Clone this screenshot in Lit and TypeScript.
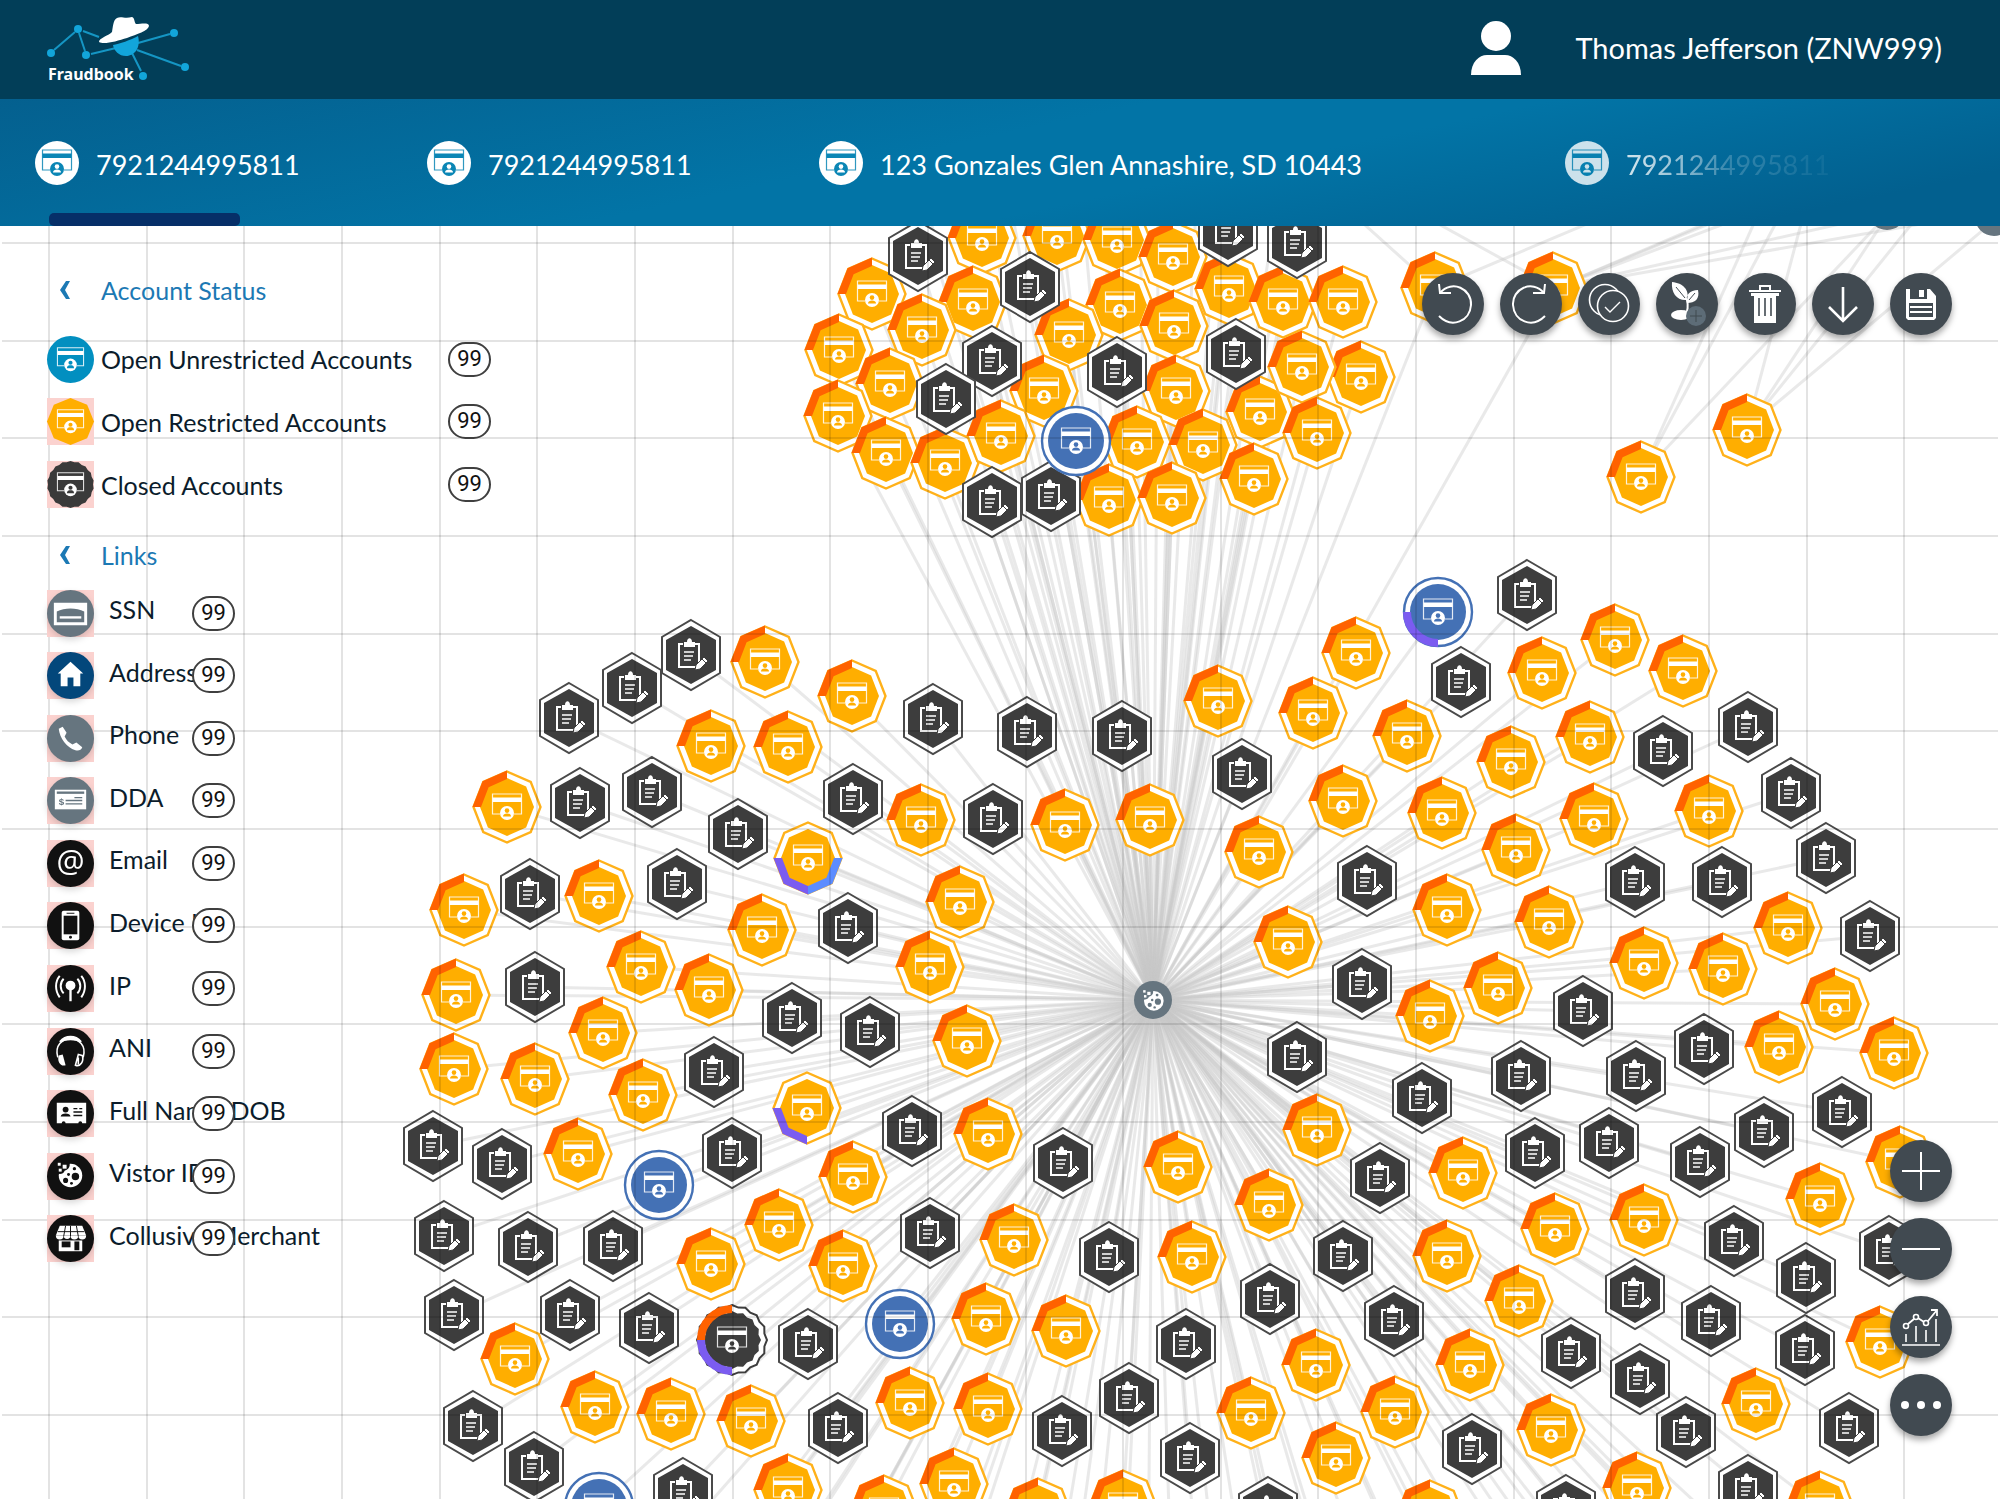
import { LitElement, html, svg, css } from "lit";
import { customElement, state } from "lit/decorators.js";
import { classMap } from "lit/directives/class-map.js";

type Kind = "restricted" | "multi" | "linked" | "merged" | "case" | "open" | "openLinked" | "closed";
type Point = [number, number];

/* Graph layout in world units; the camera zoom turns them into canvas pixels. */
const ZOOM = 1.27551;
const at = (v: number) => Math.round(v * ZOOM) + 1;
const HUB: Point = [903, 783];

const RESTRICTED: Point[] = [
  [769, 186], [828, 184], [875, 187], [919, 201], [963, 226], [683, 230], [762, 236], [877, 238], [1005, 236],
  [1052, 236], [920, 255], [837, 262], [657, 274], [722, 258], [1066, 295], [818, 306], [697, 300],
  [921, 306], [656, 325], [987, 322], [1020, 287], [1032, 339], [694, 354], [740, 362], [784, 341], [891, 346],
  [942, 348], [982, 375], [869, 391], [918, 390],
  [1124, 225], [1217, 225], [1369, 336], [1286, 373],
  [599, 518], [667, 545], [557, 584], [617, 585], [397, 632], [721, 642], [834, 646], [901, 642], [469, 702],
  [363, 713], [597, 728], [752, 706], [502, 757], [555, 775], [728, 757], [357, 779], [472, 809], [757, 815],
  [355, 837], [419, 845], [503, 858], [774, 888], [452, 904], [668, 922], [610, 960], [557, 990], [660, 992],
  [794, 971], [923, 914], [934, 985], [994, 944], [403, 1065], [772, 1033], [835, 1043], [466, 1102],
  [525, 1108], [588, 1113], [713, 1099], [774, 1104], [980, 1107], [617, 1167], [747, 1163], [692, 1184],
  [813, 1186], [880, 1180],
  [1062, 511], [1208, 527], [1265, 501], [1319, 525], [954, 549], [1029, 558], [1102, 576], [1246, 577],
  [1184, 597], [1052, 627], [1130, 637], [1339, 635], [1249, 641], [1188, 666], [986, 667], [1134, 713],
  [1214, 722], [1401, 727], [1009, 738], [1288, 754], [1350, 759], [1174, 774], [1438, 786], [1120, 796],
  [1394, 820], [1484, 825], [1032, 885], [1146, 919], [1489, 910], [1426, 939], [1218, 963], [1288, 956],
  [1134, 984], [1190, 1019], [1031, 1069], [1152, 1069], [1473, 1051], [1093, 1106], [1215, 1120],
  [1376, 1100], [1047, 1142], [1283, 1166], [1120, 1188], [1426, 1181],
];

const CASES: Point[] = [
  [719, 200], [962, 180], [1016, 190], [807, 224], [777, 282], [968, 277], [741, 312], [875, 291], [777, 393],
  [823, 388],
  [541, 513], [495, 539], [445, 562], [731, 563], [804, 573], [879, 576], [454, 629], [510, 620], [668, 626],
  [578, 653], [778, 641], [530, 692], [415, 700], [664, 727], [419, 773], [620, 797], [681, 808], [559, 840],
  [714, 886], [339, 898], [393, 912], [573, 903], [833, 911], [347, 968], [413, 977], [480, 976], [728, 966],
  [869, 985], [355, 1030], [446, 1030], [508, 1040], [633, 1053], [929, 1053], [995, 1018], [370, 1117],
  [656, 1119], [832, 1121], [884, 1095], [932, 1142], [418, 1149], [535, 1170], [993, 1185],
  [1196, 466], [1145, 534], [1370, 569], [1303, 588], [973, 606], [1403, 621], [1431, 672], [1071, 690],
  [1281, 691], [1349, 691], [1465, 733], [1067, 771], [1240, 792], [1335, 822], [1016, 828], [1114, 860],
  [1192, 843], [1282, 843], [1443, 871], [1382, 887], [1261, 895], [1203, 903], [1332, 910], [1081, 923],
  [1359, 972], [1480, 980], [1052, 984], [1415, 1001], [1281, 1014], [1341, 1035], [1092, 1035], [1414, 1058],
  [1231, 1060], [1285, 1080], [1321, 1122], [1449, 1119], [1153, 1135], [1370, 1167], [1227, 1183],
];

const SPECIAL: { kind: Kind; p: Point }[] = [
  { kind: "open", p: [843, 345] },
  { kind: "open", p: [516, 928] },
  { kind: "open", p: [705, 1037] },
  { kind: "open", p: [469, 1181] },
  { kind: "openLinked", p: [1127, 479] },
  { kind: "multi", p: [633, 672] },
  { kind: "linked", p: [632, 868] },
  { kind: "closed", p: [573, 1050] },
];

/* Accounts outside the visible part of the canvas that still have links to the hub. */
const OFFSCREEN: Point[] = [
  ...Array.from({ length: 22 }, (_, i): Point => [700 + i * 16, 90 + ((i * 37) % 60)]),
  ...Array.from({ length: 46 }, (_, i): Point => [500 + i * 21, 1240 + ((i * 53) % 90)]),
];

/* Links between the upper right accounts and hubs beyond the top edge. */
const SIDE_LINKS: [Point, Point][] = [
  [[1218, 225], [1390, 160]], [[1218, 225], [1440, 130]], [[1218, 225], [1480, 166]], [[1218, 225], [1563, 165]],
  [[1218, 225], [1350, 170]], [[1218, 225], [1100, 160]], [[1218, 225], [903, 783]], [[1124, 225], [1030, 140]],
  [[1124, 225], [1290, 155]], [[1369, 335], [1415, 160]], [[1369, 335], [1480, 166]], [[1369, 335], [1563, 172]],
  [[1369, 335], [1510, 160]], [[1286, 372], [1385, 150]], [[1286, 372], [1480, 166]], [[1286, 372], [1410, 140]],
];

const ring = (n: number, rx: number, ry: number): Point[] =>
  Array.from({ length: n }, (_, i): Point => {
    const a = (i * 2 * Math.PI) / n - Math.PI / 2;
    return [Math.round(rx * Math.cos(a) * 10) / 10, Math.round(ry * Math.sin(a) * 10) / 10];
  });
const pts = (p: Point[]) => p.map((q) => q.join(",")).join(" ");

const OCT_OUT = ring(8, 33.5, 35.5);
const OCT_IN = ring(8, 27, 29);
const octBand = (from: number, to: number) => {
  const outer = ring(8, 34.5, 36.5);
  const inner = ring(8, 26, 28);
  const idx = Array.from({ length: to - from + 1 }, (_, i) => (from + i) % 8);
  return pts([...idx.map((i) => outer[i]), ...idx.reverse().map((i) => inner[i])]);
};
const scallop = (n: number, r: number, depth: number) =>
  pts(ring(n * 2, 1000, 1000).map(([x, y], i): Point => {
    const k = (i % 2 ? r - depth : r) / 1000;
    return [Math.round(x * k * 10) / 10, Math.round(y * k * 10) / 10];
  }));

const card = (fg: string, bg: string) => svg`
  <path d="M-7 7H-14.5V-13H14.5V7H7" fill="none" stroke=${fg} stroke-width="1.2" stroke-opacity=".85"/>
  <rect x="-14.5" y="-9.5" width="29" height="4.5" fill=${fg}/>
  <circle cx="0" cy="6" r="7" fill=${fg}/>
  <circle cx="0" cy="3.6" r="2.3" fill=${bg}/>
  <path d="M-4 9.6C-4 7-2 6.4 0 6.4S4 7 4 9.6Z" fill=${bg}/>`;

const octagon = svg`
  <polygon points=${pts(OCT_OUT)} fill="#fff" stroke="#ffb11a" stroke-width="2.4"/>
  <polygon points=${pts(OCT_IN)} fill="#ffae00"/>
  ${card("#fff", "#ffae00")}`;

const cookie = (fg: string, bg: string) => svg`
  <circle cx="1" cy="1" r="12" fill=${fg}/>
  <path d="M-12-12H0C1-7-2-5-5-4C-6-1-9 0-12-1Z" fill=${bg}/>
  <rect x="-12" y="-12" width="3" height="3" fill=${fg}/><rect x="-7" y="-10" width="4" height="4" fill=${fg}/>
  <rect x="-11" y="-6" width="3" height="3" fill=${fg}/>
  <circle cx="6" cy="2" r="3.8" fill=${bg}/><circle cx="-4" cy="6" r="2.6" fill=${bg}/>
  <circle cx="5" cy="-6" r="1.7" fill=${bg}/><circle cx="2" cy="9" r="1.5" fill=${bg}/><circle cx="-1" cy="0" r="1.5" fill=${bg}/>`;

const defs = svg`<defs>
  <g id="restricted">${octagon}<polygon points=${octBand(6, 8)} fill="#ff6200"/></g>
  <g id="multi">${octagon}<polygon points=${octBand(4, 6)} fill="#7b5cf0"/><polygon points=${octBand(2, 4)} fill="#5c8cff"/></g>
  <g id="linked">${octagon}<polygon points=${octBand(4, 6)} fill="#7b5cf0"/></g>
  <g id="case">
    <polygon points="0,-35 29,-18 29,18 0,35 -29,18 -29,-18" fill="#fff" stroke="#4a4a4a" stroke-width="2"/>
    <polygon points="0,-29 25,-15 25,15 0,29 -25,15 -25,-15" fill="#3d3d3d"/>
    <path d="M-8-11H-12V12H8V-11H4" fill="none" stroke="#fff" stroke-width="2"/>
    <path d="M-7-8V-13H-4C-4-18 1-18 1-13H4V-8Z" fill="#fff"/>
    <path d="M-7-3H3M-7 1H2M-7 5H0" stroke="#fff" stroke-width="1.6"/>
    <path d="M4 15L5 10L13 2L17 6L9 14Z" fill="#fff" stroke="#3d3d3d"/>
    <path d="M11 4L15 8" stroke="#3d3d3d"/>
  </g>
  <g id="open">
    <circle r="34" fill="#fff" stroke="#4471b5" stroke-width="2.4"/><circle r="28" fill="#4471b5"/>${card("#fff", "#4471b5")}
  </g>
  <g id="openLinked"><use href="#open"/><path d="M-31 0A31 31 0 0 0 0 31" fill="none" stroke="#7b5cf0" stroke-width="8"/></g>
  <g id="closed">
    <polygon points=${scallop(16, 35, 2)} fill="#fff" stroke="#3d3d3d" stroke-width="2"/>
    <polygon points=${scallop(16, 29, 2)} fill="#3d3d3d"/>${card("#fff", "#3d3d3d")}
    <path d="M-31 0A31 31 0 0 1 0-31" fill="none" stroke="#ff6200" stroke-width="8"/>
    <path d="M-31 0A31 31 0 0 0 0 31" fill="none" stroke="#7b5cf0" stroke-width="8"/>
  </g>
</defs>`;

const place = (kind: Kind, [x, y]: Point) => svg`<use href="#${kind}" x=${at(x)} y=${at(y)} />`;
const link = (a: Point, b: Point) => svg`<line x1=${at(a[0])} y1=${at(a[1])} x2=${at(b[0])} y2=${at(b[1])} />`;

const disc = (fill: string, body: unknown) => svg`<circle cx="24" cy="24" r="24" fill=${fill}/>${body}`;
const SLATE = "#66757f";
const INK = "#111";

const LINK_TYPES: { label: string; art: unknown }[] = [
  { label: "SSN", art: disc(SLATE, svg`<path d="M7 13H41V36H7Z" fill="#fff"/><path d="M10 22C18 18 30 18 38 22V33H10Z" fill="${SLATE}"/><path d="M13 28H35" stroke="#fff" stroke-width="2.4"/>`) },
  { label: "Address", art: disc("#03477b", svg`<path d="M24 10L37 22H34V35H27V26H21V35H14V22H11Z" fill="#fff"/>`) },
  { label: "Phone", art: disc(SLATE, svg`<path d="M12 14L16 12L20 18L18 22C20 26 22 28 26 30L30 28L36 33C35 36 32 37 29 36C20 33 13 24 12 14Z" fill="#fff"/>`) },
  { label: "DDA", art: disc(SLATE, svg`<rect x="8" y="13" width="32" height="20" fill="#fff"/><path d="M10 16H38" stroke="${SLATE}" stroke-width="2.4"/><path d="M19 24H36M28 21H36M19 27.500H36" stroke="${SLATE}" stroke-width="1.4"/><text x="12" y="29" font-family="Liberation Sans" font-size="10" font-weight="700" fill="${SLATE}">$</text>`) },
  { label: "Email", art: disc(INK, svg`<text x="24" y="33" text-anchor="middle" font-family="Open Sans" font-size="32" fill="#fff">@</text>`) },
  { label: "Device ID", art: disc(INK, svg`<rect x="15" y="9" width="18" height="30" rx="2" fill="#fff"/><rect x="17" y="14" width="14" height="19" fill="${INK}"/><circle cx="24" cy="36" r="1.5" fill="${INK}"/><path d="M20 11.500H28" stroke="${INK}"/>`) },
  { label: "IP", art: disc(INK, svg`<circle cx="24" cy="21" r="5" fill="#fff"/><path d="M24 21V37" stroke="#fff" stroke-width="2.4"/><path d="M17 14C13 18 13 25 17 29M31 14C35 18 35 25 31 29M13 11C8 17 8 26 13 33M35 11C40 17 40 26 35 33" fill="none" stroke="#fff" stroke-width="2"/>`) },
  { label: "ANI", art: disc(INK, svg`<path d="M11 30C4 5 44 5 37 30" fill="none" stroke="#fff" stroke-width="1.6"/><path d="M13 14C19 7 29 7 35 14C29 11 19 11 13 14Z" fill="#fff" stroke="#fff" stroke-width="1.5"/><path d="M12 28L16 27L19 38C14 40 10 34 12 28Z" fill="#fff"/><path d="M36 28L32 27L29 38C34 40 38 34 36 28ZM32 30V37" fill="${INK}" stroke="#fff" stroke-width="1.6"/>`) },
  { label: "Full Name/DOB", art: disc(INK, svg`<path d="M10 13H40V34H36A2 2 0 0 0 32 34H19A2 2 0 0 0 15 34H10Z" fill="#fff"/><circle cx="19" cy="20" r="3" fill="${INK}"/><path d="M14 27C14 23 24 23 24 27Z" fill="${INK}"/><path d="M27 19H31M33 19H36M27 22.500H36M27 26H36" stroke="${INK}" stroke-width="1.4"/>`) },
  { label: "Vistor ID", art: disc(INK, svg`<g transform="translate(23 22)">${cookie("#fff", INK)}</g>`) },
  { label: "Collusive Merchant", art: disc(INK, svg`<path d="M13 11H36L40 21H9Z" fill="#fff"/><path d="M9 21A3 3 0 0 0 17 21A3 3 0 0 0 24 21A3 3 0 0 0 32 21A3 3 0 0 0 40 21Z" fill="#fff"/><path d="M19 11L17 22M24 11V22M30 11L32 22M11 17H38" stroke="${INK}"/><path d="M12 26H36V37H12Z" fill="#fff"/><rect x="15" y="27" width="9" height="6" fill="${INK}"/><rect x="28" y="27" width="5" height="9" fill="${INK}"/>`) },
];

const badgeCard = (bg: string) => svg`<g transform="translate(24 24) scale(.92)">${card("#fff", bg)}</g>`;
const STATUSES: { label: string; plain?: boolean; art: unknown }[] = [
  { label: "Open Unrestricted Accounts", plain: true, art: disc("#028fc0", badgeCard("#028fc0")) },
  { label: "Open Restricted Accounts", art: svg`<polygon transform="translate(24 24)" points=${pts(ring(8, 24, 24))} fill="#ffae00"/>${badgeCard("#ffae00")}` },
  { label: "Closed Accounts", art: svg`<polygon transform="translate(24 24)" points=${scallop(18, 24, 1)} fill="#3a3a3a"/>${badgeCard("#3a3a3a")}` },
];

const TABS = ["7921244995811", "7921244995811", "123 Gonzales Glen Annashire, SD 10443", "7921244995811"];

const line = (d: string, w = 2) => svg`<path d=${d} fill="none" stroke="#fff" stroke-width=${w}/>`;

/* Button art is drawn on a 62 by 62 field. */
const TOOLS: { label: string; art: unknown }[] = [
  { label: "Undo", art: svg`${line("M17 11L18 20L29 20")}${line("M18 20C30 6 50 16 49 32C48 48 30 56 17 43")}` },
  { label: "Redo", art: svg`${line("M45 11L44 20L33 20")}${line("M44 20C32 6 12 16 13 32C14 48 32 56 45 43")}` },
  { label: "Select", art: svg`<circle cx="27" cy="27" r="15.500" fill="none" stroke="#fff" stroke-width="1.6"/><circle cx="35" cy="33" r="15.500" fill="#414a51" stroke="#fff" stroke-width="1.6"/>${line("M27 34L32 39L42 29", 1.4)}` },
  { label: "Grow", art: svg`<path d="M16 9C27 10 34 17 31 27C21 28 15 20 16 9ZM42 17C34 17 29 22 31 30C39 30 44 26 42 17Z" fill="#fff"/><path d="M19 12L31 27C33 35 31 40 29 44M40 19L32 29" fill="none" stroke="#fff" stroke-width="2"/><path d="M20 14L29 25M39 20L33 27" stroke="#414a51"/><ellipse cx="25" cy="42" rx="10" ry="5" fill="#fff"/><circle cx="40" cy="43" r="10" fill="#5d6c77"/><path d="M40 37V49M34 43H46" stroke="#414a51"/>` },
  { label: "Delete", art: svg`<path d="M17 20H45V23H42V50H20V23H17ZM15 17H47V19H15Z" fill="#fff"/>${line("M26 17V13H36V17")}<path d="M25 25V43M31 25V43M37 25V43" stroke="#414a51" stroke-width="1.6"/>` },
  { label: "Download", art: line("M31 14V47M17 34L31 48L45 34", 2.6) },
  { label: "Save", art: svg`<path d="M16 16H20V26H37V16H40L46 23V45L44 47H18L16 45Z" fill="#fff"/><path d="M29 17H34V24H29Z" fill="#fff"/><path d="M19 30H43V44H19Z" fill="#414a51"/><path d="M20 34H42M20 39H42" stroke="#fff" stroke-width="2"/>` },
];
const VIEW_TOOLS: { label: string; art: unknown }[] = [
  { label: "Zoom in", art: line("M31 12V50M12 31H50") },
  { label: "Zoom out", art: line("M12 31H50") },
  { label: "Statistics", art: svg`${line("M12 49H50M16 46V38M26 46V30M36 46V34M46 46V23", 1.6)}${line("M18 28L24 23M28 22L34 26M38 25L47 14M41 14H47V20", 1.8)}<g fill="none" stroke="#fff" stroke-width="1.6"><circle cx="16" cy="30" r="2.500"/><circle cx="26" cy="21" r="2.500"/><circle cx="36" cy="27" r="2.500"/></g>` },
  { label: "More", art: svg`<g fill="#fff"><circle cx="15" cy="31" r="4"/><circle cx="31" cy="31" r="4"/><circle cx="47" cy="31" r="4"/></g>` },
];

@customElement("app-root")
export class AppRoot extends LitElement {
  static styles = css`
    :host {
      display: flex;
      flex-direction: column;
      min-height: 100vh;
      background: #fff;
      color: #0b1c2b;
      font-family: Lato, "Open Sans", sans-serif;
    }
    * { box-sizing: border-box; }
    button { font: inherit; color: inherit; border: 0; padding: 0; margin: 0; background: none; cursor: pointer; }
    svg { display: block; }
    .header {
      display: flex;
      align-items: center;
      justify-content: space-between;
      height: 99px;
      padding: 0 58px 0 44px;
      background: #023e58;
      color: #fff;
    }
    .wordmark { font: 700 16px "Noto Sans", sans-serif; fill: #fff; }
    .user { display: flex; align-items: center; gap: 54px; padding-bottom: 4px; font-size: 29px; }
    .tabs {
      display: grid;
      grid-template-columns: 392fr 392fr 746fr 435fr;
      height: 127px;
      padding-left: 35px;
      background: linear-gradient(168deg, #04608f 0%, #0274a6 45%, #0274a6 60%, #02608f 90%);
      color: #fff;
    }
    .tab {
      position: relative;
      display: flex;
      align-items: center;
      gap: 17px;
      font-size: 27px;
      line-height: 36px;
      white-space: nowrap;
      text-align: left;
    }
    .tab span { padding-top: 4px; }
    .tab.active::after {
      content: "";
      position: absolute;
      left: 14px;
      bottom: 0;
      width: 191px;
      height: 13px;
      border-radius: 5px;
      background: #062f68;
    }
    .tab.fading { mask-image: linear-gradient(90deg, rgba(0,0,0,.8) 0 70px, rgba(0,0,0,.6) 110px, rgba(0,0,0,.2) 165px, rgba(0,0,0,.06) 260px); }
    .stage {
      position: relative;
      flex: 1;
      display: flex;
      justify-content: space-between;
      overflow: hidden;
    }
    .graph { position: absolute; inset: 0; width: 100%; height: 100%; }
    .links { stroke: #c8c8c8; stroke-opacity: .4; stroke-width: 3; }
    .grid { stroke: #000; stroke-opacity: .11; stroke-width: 2; }
    .sidebar { position: relative; padding: 48px 0 0 47px; }
    .section-title {
      display: grid;
      grid-template-columns: 54px auto;
      align-items: center;
      height: 32px;
      color: #1c79b4;
      font-size: 25px;
      text-align: left;
    }
    .section-title svg { margin-left: 12px; }
    .list { display: grid; grid-auto-rows: 1fr; margin: 0; padding: 0; list-style: none; font-size: 25px; }
    .row { display: grid; align-items: center; white-space: nowrap; }
    .statuses { height: 188px; margin: 22px 0 23px; }
    .statuses .row { grid-template-columns: 54px 347px auto; }
    .kinds { height: 688px; margin-top: 11px; }
    .kinds .row { grid-template-columns: 62px 83px auto; }
    .kinds .label { padding-bottom: 8px; }
    .icon { width: 47px; height: 47px; background: #fbd2cf; }
    .icon.plain { background: none; }
    .icon svg { width: 47px; height: 47px; overflow: visible; }
    .kinds .icon svg { filter: drop-shadow(0 3px 3px rgba(0, 0, 0, .15)); }
    .label { width: 0; }
    .count {
      z-index: 1;
      width: 43px;
      height: 35px;
      border: 2px solid #3f3f3f;
      border-radius: 18px;
      background: #fff;
      color: #111;
      font: 22px/30px Roboto, sans-serif;
      text-align: center;
    }
    .controls {
      position: relative;
      display: flex;
      flex-direction: column;
      justify-content: space-between;
      align-items: flex-end;
      padding: 47px 48px 63px 0;
    }
    .tools, .view-tools { display: flex; gap: 16px; }
    .view-tools { flex-direction: column; }
    .tool {
      width: 62px;
      height: 62px;
      border-radius: 50%;
      background: #414a51;
      box-shadow: 0 4px 6px rgba(0, 0, 0, .35);
    }
  `;

  @state() private activeTab = 0;
  @state() private statusOpen = true;
  @state() private linksOpen = true;

  private renderGraph() {
    const step = 97.65;
    const all = [...RESTRICTED, ...CASES, ...SPECIAL.map((s) => s.p)];
    const toHub = all.filter(([x, y]) => !(x > 1200 && y < 400));
    return html`<svg class="graph" viewBox="0 226 2000 1273" preserveAspectRatio="xMinYMin slice" role="img" aria-label="Account link graph">
      ${defs}
      <g class="links">
        ${[...toHub, ...OFFSCREEN].map((p) => link(HUB, p))}
        ${SIDE_LINKS.map(([a, b]) => link(a, b))}
      </g>
      <g fill="#66757f">
        <circle cx=${at(HUB[0])} cy=${at(HUB[1])} r="19" />
        <circle cx="1887" cy="211" r="19" /><circle cx="1994" cy="217" r="19" />
      </g>
      <g transform="translate(${at(HUB[0])} ${at(HUB[1])}) scale(.82)">${cookie("#fff", "#66757f")}</g>
      ${RESTRICTED.map((p) => place("restricted", p))}
      ${CASES.map((p) => place("case", p))}
      ${SPECIAL.map((s) => place(s.kind, s.p))}
      <g class="grid">
        ${Array.from({ length: 20 }, (_, i) => Math.round(49 + i * step)).map((x) => svg`<line x1=${x} x2=${x} y1="226" y2="1499" />`)}
        ${Array.from({ length: 13 }, (_, i) => Math.round(243 + i * step)).map((y) => svg`<line x1="2" x2="1998" y1=${y} y2=${y} />`)}
      </g>
    </svg>`;
  }

  private renderTitle(text: string, open: boolean, toggle: () => void) {
    return html`<button class="section-title" aria-expanded=${open} @click=${toggle}>
      <svg width="12" height="20" viewBox="0 0 12 20"><path d="M7 1H11L6 10L11 19H7L1 10Z" fill="#1c79b4"/></svg>
      <span>${text}</span>
    </button>`;
  }

  private renderTool(t: { label: string; art: unknown }) {
    return html`<button class="tool" aria-label=${t.label}>
      <svg width="62" height="62" viewBox="0 0 62 62">${t.art}</svg>
    </button>`;
  }

  render() {
    return html`
      <header class="header">
        <svg width="150" height="80" viewBox="44 10 150 80" role="img" aria-label="Fraudbook">
          <g stroke="#1596c4" stroke-width="2">
            <path d="M54 50L75 32M79 33L85 51M83 31L99 37M91 54L116 48M138 43L170 34M137 50L181 66M132 53L141 71"/>
          </g>
          <g fill="#12a5da">
            <circle cx="78" cy="29" r="4"/><circle cx="51" cy="53" r="4"/><circle cx="86" cy="55" r="4"/>
            <circle cx="174" cy="33" r="4"/><circle cx="185" cy="67" r="4"/><circle cx="143" cy="76" r="4"/>
            <path d="M113 45C119 44 131 40 138 36C141 47 135 56 126 56C119 56 114 51 113 45Z"/>
          </g>
          <path d="M99 42C99 38 108 36 112 32C113 27 113 20 117 18C121 16 125 19 132 17C135 18 134 22 136 24C141 24 149 22 149 26C148 31 137 34 127 38C117 41 104 45 99 42Z" fill="#fff"/>
          <text class="wordmark" x="48" y="80">Fraudbook</text>
        </svg>
        <div class="user">
          <svg width="50" height="56" viewBox="0 0 50 56" fill="#fff" aria-hidden="true">
            <circle cx="25" cy="16" r="15"/><path d="M0 55C0 42 8 35 16 35H34C42 35 50 42 50 55Z"/>
          </svg>
          <span>Thomas Jefferson (ZNW999)</span>
        </div>
      </header>
      <nav class="tabs">
        ${TABS.map((t, i) => html`<button
          class=${classMap({ tab: true, active: i === this.activeTab, fading: i === TABS.length - 1 })}
          @click=${() => (this.activeTab = i)}>
          <svg width="44" height="44" viewBox="-22 -22 44 44"><circle r="22" fill="#fff"/>${card("#0a86b5", "#fff")}</svg>
          <span>${t}</span>
        </button>`)}
      </nav>
      <main class="stage">
        ${this.renderGraph()}
        <aside class="sidebar">
          ${this.renderTitle("Account Status", this.statusOpen, () => (this.statusOpen = !this.statusOpen))}
          ${this.statusOpen ? html`<ul class="list statuses">
            ${STATUSES.map((s) => html`<li class="row">
              <span class=${classMap({ icon: true, plain: !!s.plain })}><svg viewBox="0 0 48 48">${s.art}</svg></span>
              <span class="label">${s.label}</span><span class="count">99</span>
            </li>`)}
          </ul>` : ""}
          ${this.renderTitle("Links", this.linksOpen, () => (this.linksOpen = !this.linksOpen))}
          ${this.linksOpen ? html`<ul class="list kinds">
            ${LINK_TYPES.map((k) => html`<li class="row">
              <span class="icon"><svg viewBox="0 0 48 48">${k.art}</svg></span>
              <span class="label">${k.label}</span><span class="count">99</span>
            </li>`)}
          </ul>` : ""}
        </aside>
        <div class="controls">
          <div class="tools">${TOOLS.map((t) => this.renderTool(t))}</div>
          <div class="view-tools">${VIEW_TOOLS.map((t) => this.renderTool(t))}</div>
        </div>
      </main>
    `;
  }
}
